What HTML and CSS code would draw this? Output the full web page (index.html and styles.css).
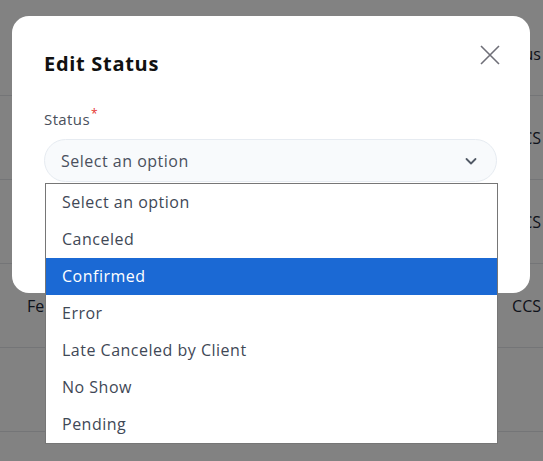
FILE: index.html
```html
<!DOCTYPE html>
<html lang="en">
<head>
    <meta charset="UTF-8">
    <meta name="viewport" content="width=device-width, initial-scale=1.0">
    <title>Edit Status</title>
    <link rel="stylesheet" href="styles.css">
</head>
<body>
    <!-- таблица под модалкой -->
    <div class="page">
        <div class="row row-head"><span class="cell-left"></span><span class="cell-right">Status</span></div>
        <div class="row"><span class="cell-left"></span><span class="cell-right">CCS</span></div>
        <div class="row"><span class="cell-left"></span><span class="cell-right">CCS</span></div>
        <div class="row"><span class="cell-left">Feb</span><span class="cell-right">CCS</span></div>
        <div class="row"></div>
    </div>

    <div class="overlay"></div>

    <div class="modal">
        <div class="modal-header">
            <h2 class="modal-title">Edit Status</h2>
            <button class="close-btn" aria-label="Close">
                <svg width="20" height="20" viewBox="0 0 20 20">
                    <path d="M1 1 L19 19 M19 1 L1 19" stroke="#6f6f78" stroke-width="1.6" fill="none"/>
                </svg>
            </button>
        </div>
        <label class="field-label">Status<span class="req">*</span></label>
        <div class="select">
            <span>Select an option</span>
            <svg class="chevron" width="14" height="14" viewBox="0 0 14 14">
                <path d="M2.5 5 L7 9.5 L11.5 5" stroke="#525a66" stroke-width="1.8" fill="none" stroke-linecap="round" stroke-linejoin="round"/>
            </svg>
        </div>
    </div>

    <ul class="options">
        <li>Select an option</li>
        <li>Canceled</li>
        <li class="active">Confirmed</li>
        <li>Error</li>
        <li>Late Canceled by Client</li>
        <li>No Show</li>
        <li>Pending</li>
    </ul>
</body>
</html>
```
FILE: styles.css
```css
body {
    margin: 0;
    width: 543px;
    height: 461px;
    overflow: hidden;
    position: relative;
    background: #ffffff;
    font-family: 'Open Sans', 'Noto Sans', sans-serif;
    color: #3f4856;
}
.page {
    padding-top: 12px;
}
.row {
    display: flex;
    justify-content: space-between;
    align-items: center;
    height: 83px;
    border-bottom: 1px solid #e4e6ea;
    font-size: 16px;
    color: #1c2636;
}
.row-head {
    height: 83px;
}
.cell-left {
    padding-left: 27px;
}
.cell-right {
    width: 52px;
    margin-right: 2px;
    text-align: right;
}
.overlay {
    position: absolute;
    inset: 0;
    background: rgba(0, 0, 0, 0.49);
}
.modal {
    position: absolute;
    left: 12px;
    top: 16px;
    width: 518px;
    height: 277px;
    box-sizing: border-box;
    padding: 30px 33px 0 32px;
    background: #ffffff;
    border-radius: 17px;
}
.modal-header {
    display: flex;
    justify-content: space-between;
    align-items: flex-start;
    height: 59px;
}
.modal-title {
    margin: 4px 0 0;
    font-size: 20px;
    font-weight: 700;
    color: #111111;
    letter-spacing: 0.7px;
}
.close-btn {
    border: none;
    background: none;
    padding: 0;
    margin: -1px -3px 0 0;
    cursor: pointer;
}
.field-label {
    display: block;
    font-size: 15px;
    color: #4a505c;
    letter-spacing: 0.4px;
    margin-bottom: 10px;
}
.req {
    color: #e5322d;
    font-size: 12px;
    vertical-align: 7px;
    margin-left: 1px;
}
.select {
    display: flex;
    justify-content: space-between;
    align-items: center;
    height: 43px;
    box-sizing: border-box;
    padding: 0 18px 0 16px;
    background: #f8fafc;
    border: 1px solid #e6ebf1;
    border-radius: 22px;
    font-size: 16px;
    letter-spacing: 0.5px;
    color: #4a505c;
}
.options {
    position: absolute;
    left: 45px;
    top: 183px;
    width: 453px;
    margin: 0;
    padding: 0;
    list-style: none;
    background: #ffffff;
    border: 1px solid #767676;
    box-sizing: border-box;
}
.options li {
    height: 37px;
    line-height: 37px;
    padding-left: 16px;
    font-size: 16px;
    letter-spacing: 0.5px;
    color: #3f4856;
}
.options li.active {
    background: #1b69d4;
    color: #ffffff;
}
```
